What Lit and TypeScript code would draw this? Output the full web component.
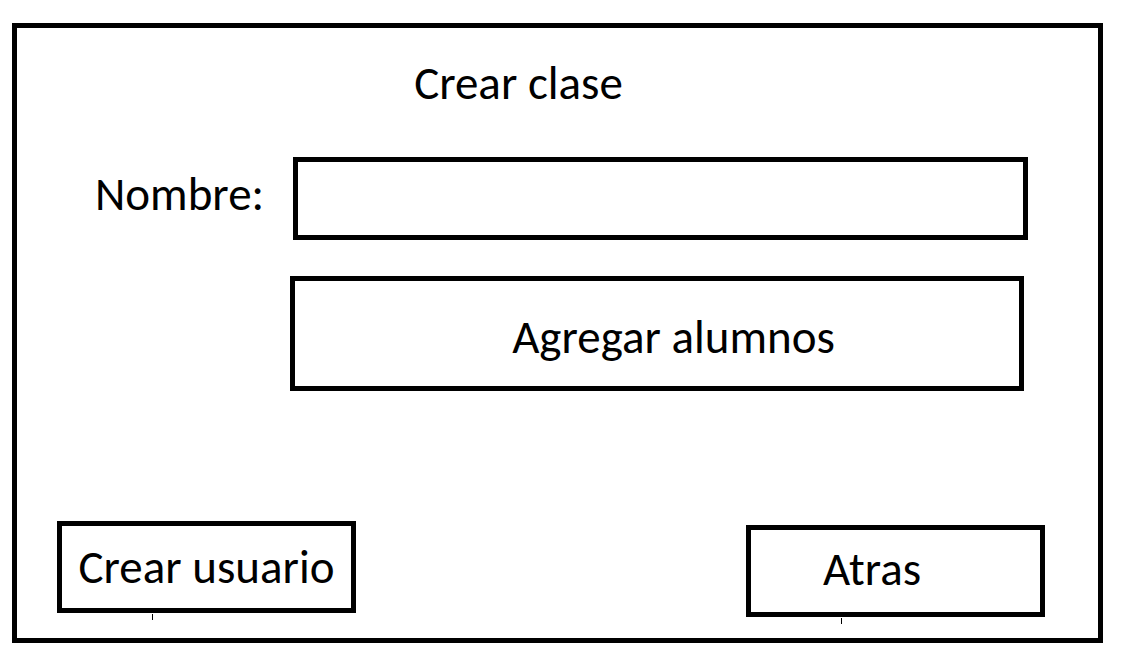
import { LitElement, html, css } from "lit";
import { customElement, state } from "lit/decorators.js";

@customElement("app-root")
export class AppRoot extends LitElement {
  static styles = css`
    :host {
      display: block;
      box-sizing: border-box;
      min-height: 100vh;
      background: #fff;
      color: #000;
      font-family: Carlito, Calibri, Lato, sans-serif;
      font-size: 47px;
      line-height: 48px;
    }
    * {
      box-sizing: border-box;
    }
    .frame {
      display: flex;
      min-height: 100vh;
      padding: 23px 19px 18px 12px;
    }
    .panel {
      flex: 1;
      display: flex;
      flex-direction: column;
      border: 5px solid #000;
    }
    .title {
      margin: 31px 0 0;
      padding-right: 78px;
      text-align: center;
      font-size: inherit;
      font-weight: 400;
    }
    .field {
      display: grid;
      grid-template-columns: 198px 1fr;
      margin: 50px 70px 0 78px;
    }
    .label {
      padding-top: 13px;
    }
    .input,
    .button {
      min-width: 0;
      margin: 0;
      border: 5px solid #000;
      border-radius: 0;
      background: #fff;
      color: inherit;
      font: inherit;
    }
    .input {
      width: 100%;
      height: 83px;
      padding: 0 16px;
    }
    .button {
      padding: 0;
      cursor: pointer;
    }
    .add {
      height: 115px;
      margin: 36px 74px 0 273px;
      padding: 6px 0 0 33px;
    }
    .actions {
      display: flex;
      justify-content: space-between;
      align-items: flex-start;
      margin-top: auto;
      padding: 0 53px 21px 40px;
    }
    .action {
      position: relative;
      width: 299px;
      height: 92px;
    }
    .action::after {
      content: "";
      position: absolute;
      left: 90px;
      top: 88px;
      width: 1px;
      height: 6px;
      background: #000;
    }
    .back {
      margin-top: 4px;
      padding: 0 47px 4px 0;
    }
  `;

  @state() private nombre = "";

  private onInput(e: Event) {
    this.nombre = (e.target as HTMLInputElement).value;
  }

  render() {
    return html`
      <main class="frame">
        <form class="panel" @submit=${(e: Event) => e.preventDefault()}>
          <h1 class="title">Crear clase</h1>
          <div class="field">
            <label class="label" for="nombre">Nombre:</label>
            <input class="input" id="nombre" type="text" .value=${this.nombre} @input=${this.onInput} />
          </div>
          <button class="button add" type="button">Agregar alumnos</button>
          <div class="actions">
            <button class="button action" type="submit">Crear usuario</button>
            <button class="button action back" type="button">Atras</button>
          </div>
        </form>
      </main>
    `;
  }
}
